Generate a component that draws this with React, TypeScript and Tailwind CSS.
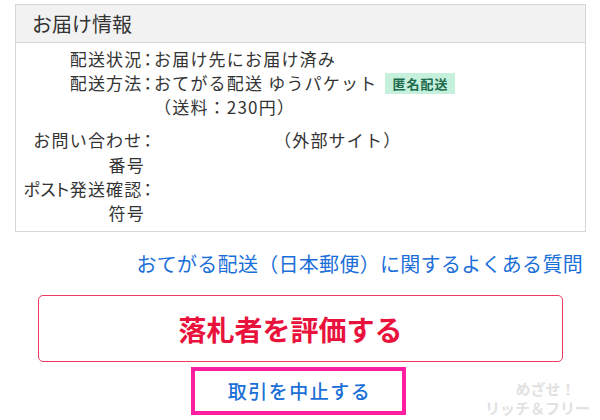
export default function App() {
  const font = "font-['Noto_Sans_CJK_JP','Noto_Sans',sans-serif]"

  const Label = ({ children }: { children: React.ReactNode }) => (
    <div className="flex justify-end">
      <div className="whitespace-nowrap text-right">{children}</div>
    </div>
  )

  const Colon = () => (
    <span className="inline-block pl-[1px] pr-[2px] tracking-normal [font-feature-settings:'palt']">：</span>
  )

  return (
    <div className={`relative w-[600px] h-[420px] overflow-hidden bg-white text-[#333] ${font}`}>
      {/* お届け情報 */}
      <section className="ml-[15px] mt-[4px] w-[571px] border border-[#d6d6d6]">
        <div className="h-[38px] bg-[#f2f2f2] border-b border-[#d6d6d6] pl-[16px] text-[20px] leading-[37px]">
          お届け情報
        </div>
        <div className="pt-[4px] pb-[6px] text-[17px] tracking-[1.2px]">
          <div className="grid grid-cols-[138px_1fr] leading-[24px]">
            <Label>配送状況<Colon /></Label>
            <div>お届け先にお届け済み</div>
          </div>
          <div className="grid grid-cols-[138px_1fr] leading-[24px]">
            <Label>配送方法<Colon /></Label>
            <div>
              <div className="flex items-center">
                <span>おてがる配送 ゆうパケット</span>
                <span className="ml-[8px] bg-[#c5f0dc] px-[7px] text-[13px] leading-[21px] font-bold text-[#1d6b4c] tracking-[1px]">
                  匿名配送
                </span>
              </div>
              <div>（送料：230円）</div>
            </div>
          </div>
          <div className="mt-[8px] grid grid-cols-[138px_1fr] leading-[25px]">
            <Label>
              お問い合わせ<Colon />
              <br />
              番号<span className="inline-block w-[9px]" />
            </Label>
            <div className="pl-[120px]">（外部サイト）</div>
          </div>
          <div className="grid grid-cols-[138px_1fr] leading-[24px]">
            <Label>
              <span className="tracking-[0.5px] [font-feature-settings:'palt']">ポスト</span>発送確認<Colon />
              <br />
              符号<span className="inline-block w-[9px]" />
            </Label>
            <div></div>
          </div>
        </div>
      </section>

      {/* FAQ link */}
      <div className="mt-[17px] pr-[17px] text-right text-[20px] leading-[30px] text-[#1b6fd8] tracking-[0.3px]">
        おてがる配送（日本郵便）に関するよくある質問
      </div>

      {/* 評価ボタン */}
      <button className="mt-[16px] ml-[38px] flex h-[67px] w-[525px] items-center justify-center rounded-[5px] border-[1.5px] border-[#ee3a5e] pr-[20px] text-[28px] font-bold text-[#e8123c]">
        落札者を評価する
      </button>

      {/* 取引中止 */}
      <div className="mt-[5px] ml-[191px] flex h-[48px] w-[215px] items-center justify-center border-4 border-[#ff1ea2] pl-[2px] text-[19px] font-medium tracking-[1.5px] text-[#1b6fd8]">
        取引を中止する
      </div>

      {/* watermark */}
      <div className="absolute right-[10px] bottom-[4px] flex flex-col items-center gap-[2px] text-[15px] font-bold leading-[17px] text-[#e2e2e2]">
        <div className="pl-[16px]">めざせ！</div>
        <div>リッチ＆フリー</div>
      </div>
    </div>
  )
}
